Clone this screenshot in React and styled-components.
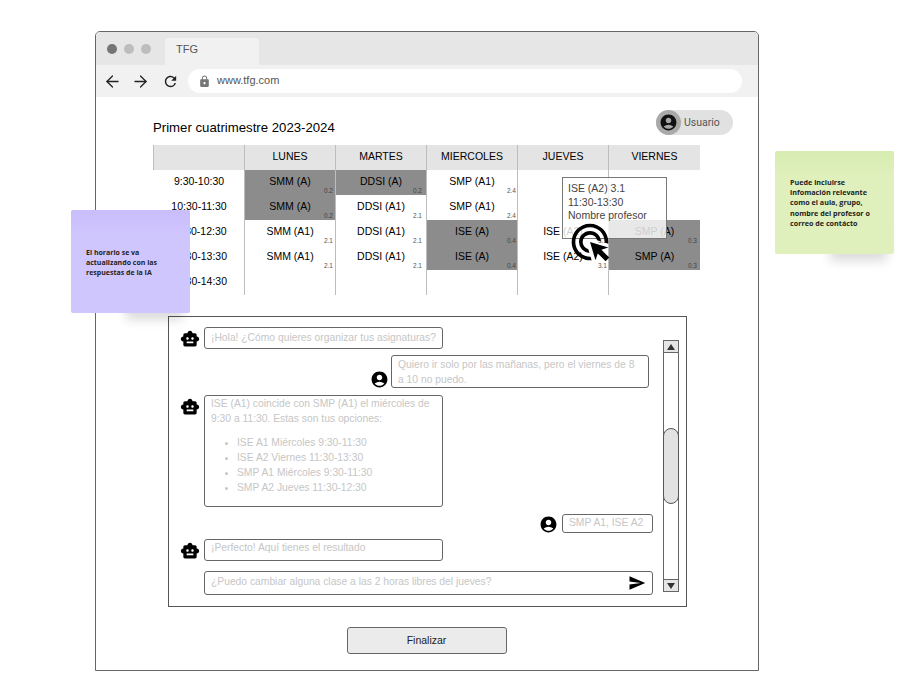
import React from "react";
import styled, { createGlobalStyle } from "styled-components";
import { ArrowLeft, ArrowRight } from "lucide-react";
import { MdAccountCircle, MdAdsClick, MdLock, MdRefresh, MdSend, MdSmartToy } from "react-icons/md";

const GlobalStyle = createGlobalStyle`
  html, body {
    margin: 0;
    padding: 0;
    background: #fff;
    font-family: "Liberation Sans", Arial, sans-serif;
    color: #000;
  }
  * {
    box-sizing: border-box;
  }
`;

const Page = styled.div`
  position: relative;
  width: 909px;
  height: 685px;
  padding: 31px 0 0 95px;
  overflow: hidden;
`;

const Window = styled.div`
  width: 664px;
  height: 640px;
  border: 1px solid #666;
  border-radius: 5px 5px 0 0;
  overflow: hidden;
  background: #fff;
`;

const TitleBar = styled.div`
  height: 33px;
  background: #e6e6e6;
  display: flex;
  align-items: flex-end;
  padding-left: 11px;
`;

const Dots = styled.div`
  display: flex;
  gap: 7px;
  align-self: center;
  margin-right: 14px;
`;

const Dot = styled.span`
  width: 10px;
  height: 10px;
  border-radius: 50%;
  background: ${({ $dark }) => ($dark ? "#757575" : "#bdbdbd")};
`;

const Tab = styled.div`
  width: 94px;
  height: 27px;
  background: #f1f1f1;
  border-radius: 4px 4px 0 0;
  padding: 5px 0 0 11px;
  font-size: 11px;
  line-height: 13px;
  color: #555;
`;

const Toolbar = styled.div`
  height: 32px;
  background: #f1f1f1;
  display: flex;
  align-items: center;
  padding: 0 16px 0 7px;
`;

const NavButton = styled.span`
  width: 28px;
  height: 20px;
  margin-left: ${({ $indent }) => $indent || 0}px;
  display: flex;
  align-items: center;
  justify-content: flex-start;
  color: #222;
`;

const AddressBar = styled.div`
  flex: 1;
  height: 24px;
  margin-left: -2px;
  border-radius: 12px;
  background: #fff;
  display: flex;
  align-items: center;
  gap: 6px;
  padding: 0 0 3px 10px;
  font-size: 11px;
  color: #555;
  svg {
    color: #777;
    margin-top: 3px;
  }
`;

const Content = styled.div`
  padding: 13px 0 0 57px;
`;

const TopRow = styled.div`
  width: 580px;
  display: flex;
  justify-content: space-between;
  align-items: flex-end;
`;

const Heading = styled.div`
  font-size: 13.2px;
  line-height: 15px;
`;

const UserPill = styled.div`
  width: 77px;
  height: 25px;
  border-radius: 13px;
  background: #e1e1e1;
  display: flex;
  align-items: center;
  gap: 3px;
  font-family: Roboto, sans-serif;
  font-size: 10.5px;
  color: #555;
`;

const Avatar = styled.span`
  width: 25px;
  height: 25px;
  border-radius: 50%;
  background: #a9a9a9;
  display: flex;
  align-items: center;
  justify-content: center;
  color: #111;
`;

const TableWrap = styled.div`
  position: relative;
  width: 547px;
  margin-top: 10px;
`;

const Table = styled.div`
  display: grid;
  grid-template-columns: repeat(5, 91px) 92px;
  grid-auto-rows: 25px;
`;

const HeadCell = styled.div`
  background: #e4e4e4;
  border-left: 1px solid #bdbdbd;
  display: flex;
  align-items: center;
  justify-content: center;
  font-size: 10.5px;
  padding-bottom: 3px;
`;

const TimeCell = styled.div`
  display: flex;
  align-items: center;
  justify-content: center;
  font-size: 10.5px;
  padding: 0 0 4px 1px;
`;

const Cell = styled.div`
  position: relative;
  background: ${({ $dark }) => ($dark ? "#8c8c8c" : "#fff")};
  border-left: 1px solid #bdbdbd;
  display: flex;
  align-items: center;
  justify-content: center;
  font-size: 10.5px;
  padding-bottom: 4px;
`;

const Credit = styled.span`
  position: absolute;
  right: ${({ $right }) => $right}px;
  bottom: 1px;
  font-size: 6.5px;
  line-height: 7px;
  color: ${({ $dark }) => ($dark ? "#444" : "#555")};
`;

const Tooltip = styled.div`
  position: absolute;
  left: 409px;
  top: 32px;
  width: 105px;
  height: 62px;
  padding: 4px 0 0 5px;
  border: 1px solid #777;
  background: rgba(255, 255, 255, 0.8);
  font-size: 10.5px;
  line-height: 13.5px;
  color: #444;
`;

const Pointer = styled.span`
  position: absolute;
  left: 415px;
  top: 75px;
  display: flex;
  color: #000;
`;

const Note = styled.div`
  position: absolute;
  left: ${({ $left }) => $left}px;
  top: ${({ $top }) => $top}px;
  width: 119px;
  height: 103px;
  border-radius: 2px;
  padding: ${({ $pad }) => $pad}px 0 0 15px;
  background: ${({ $tone }) => $tone};
  font-family: "Open Sans", sans-serif;
  font-size: ${({ $size }) => $size}px;
  font-weight: 700;
  line-height: 10.2px;
  color: #222;
  box-shadow: 24px 38px 10px -31px rgba(0, 0, 0, 0.14);
`;

const ChatPanel = styled.div`
  width: 519px;
  height: 291px;
  margin: 21px 0 0 15px;
  border: 1px solid #555;
  display: flex;
  gap: 10px;
  padding: 10px 0 0 11px;
`;

const Messages = styled.div`
  width: 473px;
  display: flex;
  flex-direction: column;
`;

const Row = styled.div`
  display: flex;
  justify-content: ${({ $user }) => ($user ? "flex-end" : "flex-start")};
  align-items: ${({ $align }) => $align || "flex-start"};
  gap: ${({ $space }) => $space ?? 4}px;
  margin-top: ${({ $gap }) => $gap || 0}px;
  padding-right: ${({ $right }) => $right || 0}px;
`;

const BotIcon = styled.span`
  width: 20px;
  height: 22px;
  padding-top: 2px;
  display: flex;
  align-items: center;
  justify-content: center;
  color: #000;
`;

const UserIcon = styled.span`
  display: flex;
  margin-bottom: -1px;
  color: #000;
`;

const Bubble = styled.div`
  width: ${({ $width }) => $width}px;
  height: ${({ $height }) => $height}px;
  border: 1px solid #666;
  border-radius: 3px;
  padding: ${({ $top }) => $top ?? 2}px ${({ $end }) => $end ?? 2}px 0 6px;
  font-size: 10.3px;
  line-height: 14.5px;
  color: #c6c6c6;
`;

const Options = styled.ul`
  margin: 9px 0 0;
  padding: 0 0 0 26px;
  li {
    line-height: 15px;
  }
  li::marker {
    font-size: 9px;
  }
`;

const InputRow = styled.div`
  width: 449px;
  height: 24px;
  margin: 10px 0 0 24px;
  border: 1px solid #666;
  border-radius: 3px;
  display: flex;
  align-items: center;
  justify-content: space-between;
  padding: 0 6px 4px 6px;
  font-size: 10.3px;
  color: #c6c6c6;
  svg {
    color: #000;
    margin-top: 4px;
  }
`;

const Scrollbar = styled.div`
  width: 16px;
  height: 252px;
  margin-top: 13px;
  border: 1px solid #666;
  display: flex;
  flex-direction: column;
`;

const ScrollButton = styled.div`
  height: 12px;
  flex: none;
  background: #e6e6e6;
  border-top: ${({ $down }) => ($down ? "1px solid #666" : "none")};
  border-bottom: ${({ $down }) => ($down ? "none" : "1px solid #666")};
  display: flex;
  align-items: center;
  justify-content: center;
  &::after {
    content: "";
    border-left: 4px solid transparent;
    border-right: 4px solid transparent;
    border-bottom: ${({ $down }) => ($down ? "none" : "6px solid #333")};
    border-top: ${({ $down }) => ($down ? "6px solid #333" : "none")};
  }
`;

const Track = styled.div`
  flex: 1;
  padding-top: 75px;
`;

const Thumb = styled.div`
  height: 76px;
  margin: 0 -1px;
  border: 1px solid #555;
  border-radius: 8px;
  background: #e2e2e2;
`;

const Footer = styled.div`
  width: 517px;
  margin: 20px 0 0 15px;
  display: flex;
  justify-content: center;
`;

const FinishButton = styled.button`
  width: 160px;
  height: 27px;
  border: 1px solid #666;
  border-radius: 3px;
  background: #ebebeb;
  font-family: inherit;
  font-size: 10.5px;
  color: #222;
  padding: 0 0 1px;
`;

const days = ["LUNES", "MARTES", "MIERCOLES", "JUEVES", "VIERNES"];

// the small credit labels don't sit at the same inset in every column
const creditInset = [2, 4, 1, 1, 3];

const schedule = [
  {
    time: "9:30-10:30",
    cells: [
      { name: "SMM (A)", credit: "0.2", dark: true },
      { name: "DDSI (A)", credit: "0.2", dark: true },
      { name: "SMP (A1)", credit: "2.4" },
      {},
      {},
    ],
  },
  {
    time: "10:30-11:30",
    cells: [
      { name: "SMM (A)", credit: "0.2", dark: true },
      { name: "DDSI (A1)", credit: "2.1" },
      { name: "SMP (A1)", credit: "2.4" },
      {},
      {},
    ],
  },
  {
    time: "11:30-12:30",
    cells: [
      { name: "SMM (A1)", credit: "2.1" },
      { name: "DDSI (A1)", credit: "2.1" },
      { name: "ISE (A)", credit: "0.4", dark: true },
      { name: "ISE (A2)", credit: "3.1" },
      { name: "SMP (A)", credit: "0.3", dark: true },
    ],
  },
  {
    time: "12:30-13:30",
    cells: [
      { name: "SMM (A1)", credit: "2.1" },
      { name: "DDSI (A1)", credit: "2.1" },
      { name: "ISE (A)", credit: "0.4", dark: true },
      { name: "ISE (A2)", credit: "3.1" },
      { name: "SMP (A)", credit: "0.3", dark: true },
    ],
  },
  { time: "13:30-14:30", cells: [{}, {}, {}, {}, {}] },
];

const Bot = () => (
  <BotIcon>
    <MdSmartToy size={20} />
  </BotIcon>
);

const Person = () => (
  <UserIcon>
    <MdAccountCircle size={19} />
  </UserIcon>
);

const App = () => {
  return (
    <Page>
      <GlobalStyle />
      <Window>
        <TitleBar>
          <Dots>
            <Dot $dark />
            <Dot />
            <Dot />
          </Dots>
          <Tab>TFG</Tab>
        </TitleBar>
        <Toolbar>
          <NavButton>
            <ArrowLeft size={19} strokeWidth={1.6} />
          </NavButton>
          <NavButton>
            <ArrowRight size={19} strokeWidth={1.6} />
          </NavButton>
          <NavButton $indent={3}>
            <MdRefresh size={17} />
          </NavButton>
          <AddressBar>
            <MdLock size={13} />
            www.tfg.com
          </AddressBar>
        </Toolbar>
        <Content>
          <TopRow>
            <Heading>Primer cuatrimestre 2023-2024</Heading>
            <UserPill>
              <Avatar>
                <MdAccountCircle size={19} />
              </Avatar>
              Usuario
            </UserPill>
          </TopRow>
          <TableWrap>
            <Table>
              <HeadCell />
              {days.map((day) => (
                <HeadCell key={day}>{day}</HeadCell>
              ))}
              {schedule.map((row) => (
                <React.Fragment key={row.time}>
                  <TimeCell>{row.time}</TimeCell>
                  {row.cells.map((cell, i) => (
                    <Cell key={i} $dark={cell.dark}>
                      {cell.name}
                      {cell.credit && (
                        <Credit $dark={cell.dark} $right={creditInset[i]}>
                          {cell.credit}
                        </Credit>
                      )}
                    </Cell>
                  ))}
                </React.Fragment>
              ))}
            </Table>
            <Tooltip>
              ISE (A2) 3.1
              <br />
              11:30-13:30
              <br />
              Nombre profesor
            </Tooltip>
            <Pointer>
              <MdAdsClick size={44} />
            </Pointer>
          </TableWrap>
          <ChatPanel>
            <Messages>
              <Row>
                <Bot />
                <Bubble $width={239} $height={22} $top={3}>
                  ¡Hola! ¿Cómo quieres organizar tus asignaturas?
                </Bubble>
              </Row>
              <Row $user $align="flex-end" $gap={6} $right={4} $space={2}>
                <Person />
                <Bubble $width={258} $height={33} $end={8}>
                  Quiero ir solo por las mañanas, pero el viernes de 8 a 10 no puedo.
                </Bubble>
              </Row>
              <Row $gap={7}>
                <Bot />
                <Bubble $width={239} $height={112} $top={1} $end={8}>
                  ISE (A1) coincide con SMP (A1) el miércoles de 9:30 a 11:30. Estas son tus opciones:
                  <Options>
                    <li>ISE A1 Miércoles 9:30-11:30</li>
                    <li>ISE A2 Viernes 11:30-13:30</li>
                    <li>SMP A1 Miércoles 9:30-11:30</li>
                    <li>SMP A2 Jueves 11:30-12:30</li>
                  </Options>
                </Bubble>
              </Row>
              <Row $user $align="center" $gap={7}>
                <Person />
                <Bubble $width={91} $height={19} $top={1}>
                  SMP A1, ISE A2
                </Bubble>
              </Row>
              <Row $gap={6}>
                <Bot />
                <Bubble $width={239} $height={22} $top={1}>
                  ¡Perfecto! Aquí tienes el resultado
                </Bubble>
              </Row>
              <InputRow>
                ¿Puedo cambiar alguna clase a las 2 horas libres del jueves?
                <MdSend size={18} />
              </InputRow>
            </Messages>
            <Scrollbar>
              <ScrollButton />
              <Track>
                <Thumb />
              </Track>
              <ScrollButton $down />
            </Scrollbar>
          </ChatPanel>
          <Footer>
            <FinishButton>Finalizar</FinishButton>
          </Footer>
        </Content>
      </Window>
      <Note $left={71} $top={210} $pad={38} $size={7} $tone="linear-gradient(#c9bdfc, #d0c6fe 25%)">
        El horario se va
        <br />
        actualizando con las
        <br />
        respuestas de la IA
      </Note>
      <Note $left={775} $top={151} $pad={26} $size={7.2} $tone="linear-gradient(#d6ecb0, #e0f0bd 25%)">
        Puede incluirse
        <br />
        infomación relevante
        <br />
        como el aula, grupo,
        <br />
        nombre del profesor o
        <br />
        correo de contácto
      </Note>
    </Page>
  );
};

export default App;
